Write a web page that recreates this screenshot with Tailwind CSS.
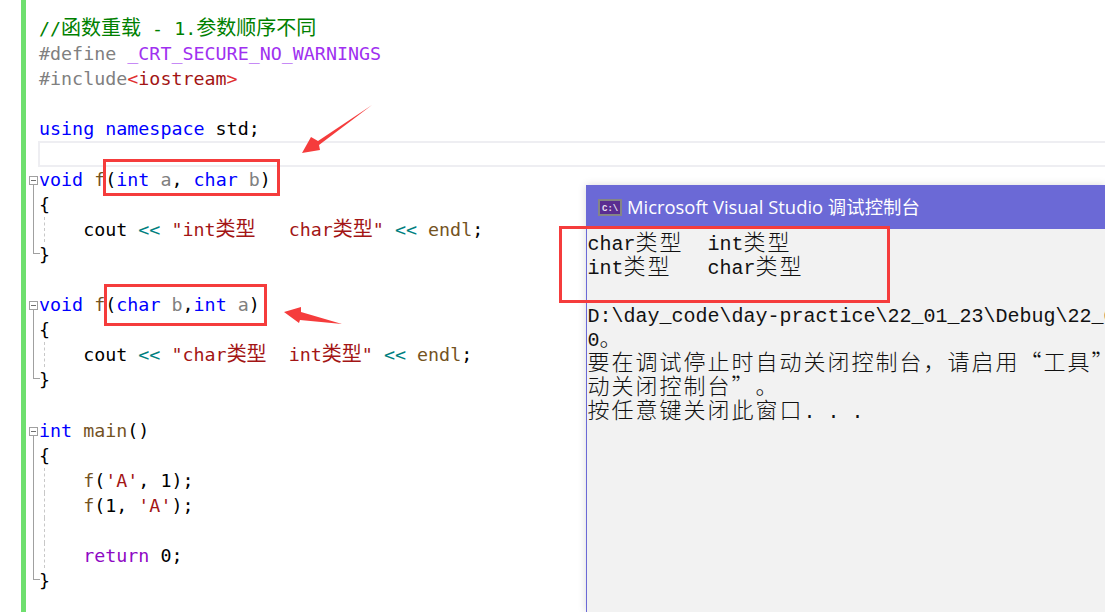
<!doctype html>
<html lang="zh-CN">
<head>
<meta charset="utf-8">
<script src="https://cdn.jsdelivr.net/npm/@tailwindcss/browser@4"></script>
</head>
<body class="bg-white">
<div class="relative w-[1105px] h-[612px] overflow-hidden bg-white">
  <div class="ml-[21px] h-full border-l-[5px] border-[#6fdf6f] pt-[16px] font-['DejaVu_Sans_Mono','Noto_Sans_CJK_SC',monospace] text-[18.33px] text-black">
    <div class="whitespace-pre h-[25.1px] leading-[25.1px] pl-[13px] text-[#008000]">//<span class="text-[20px] leading-[0px] font-['Noto_Sans_CJK_SC',sans-serif]">函数重载</span> - 1.<span class="text-[20px] leading-[0px] font-['Noto_Sans_CJK_SC',sans-serif]">参数顺序不同</span></div>
    <div class="whitespace-pre h-[25.1px] leading-[25.1px] pl-[13px] text-[#808080]">#define <span class="text-[#a030f0]">_CRT_SECURE_NO_WARNINGS</span></div>
    <div class="whitespace-pre h-[25.1px] leading-[25.1px] pl-[13px] text-[#808080]">#include<span class="text-[#e03030]">&lt;</span><span class="text-[#a31515]">iostream</span><span class="text-[#e03030]">&gt;</span></div>
    <div class="h-[25.1px]"></div>
    <div class="whitespace-pre h-[25.1px] leading-[25.1px] pl-[13px]"><span class="text-[#0000ff]">using namespace</span> std;</div>
    <div class="h-[25.1px] ml-[12px] -mr-[4px] border-2 border-[#eeeef2]"></div>
    <div class="whitespace-pre relative h-[25.1px] leading-[25.1px] pl-[13px]"><span class="absolute left-[3px] top-[9px] size-[9px] border border-[#a0a0a0] flex items-center justify-center"><span class="block w-[5px] h-px bg-[#707070]"></span></span><span class="absolute left-[7px] top-[18px] h-[8px] w-px bg-[#a0a0a0]"></span><span class="text-[#0000ff]">void</span> <span class="text-[#74531f]">f</span>(<span class="text-[#0000ff]">int</span> <span class="text-[#808080]">a</span>, <span class="text-[#0000ff]">char</span> <span class="text-[#808080]">b</span>)</div>
    <div class="whitespace-pre relative h-[25.1px] leading-[25.1px] pl-[13px]"><span class="absolute left-[7px] top-0 h-full w-px bg-[#a0a0a0]"></span>{</div>
    <div class="whitespace-pre relative h-[25.1px] leading-[25.1px] pl-[13px]"><span class="absolute left-[7px] top-0 h-full w-px bg-[#a0a0a0]"></span><span class="absolute left-[18px] top-0 h-full border-l border-dashed border-[#c8c8c8]"></span>    cout <span class="text-[#008080]">&lt;&lt;</span> <span class="text-[#a31515]">"int<span class="text-[20px] leading-[0px] font-['Noto_Sans_CJK_SC',sans-serif]">类型</span>   char<span class="text-[20px] leading-[0px] font-['Noto_Sans_CJK_SC',sans-serif]">类型</span>"</span> <span class="text-[#008080]">&lt;&lt;</span> <span class="text-[#74531f]">endl</span>;</div>
    <div class="whitespace-pre relative h-[25.1px] leading-[25.1px] pl-[13px]"><span class="absolute left-[7px] top-0 h-[12px] w-[7px] border-l border-b border-[#a0a0a0]"></span>}</div>
    <div class="h-[25.1px]"></div>
    <div class="whitespace-pre relative h-[25.1px] leading-[25.1px] pl-[13px]"><span class="absolute left-[3px] top-[9px] size-[9px] border border-[#a0a0a0] flex items-center justify-center"><span class="block w-[5px] h-px bg-[#707070]"></span></span><span class="absolute left-[7px] top-[18px] h-[8px] w-px bg-[#a0a0a0]"></span><span class="text-[#0000ff]">void</span> <span class="text-[#74531f]">f</span>(<span class="text-[#0000ff]">char</span> <span class="text-[#808080]">b</span>,<span class="text-[#0000ff]">int</span> <span class="text-[#808080]">a</span>)</div>
    <div class="whitespace-pre relative h-[25.1px] leading-[25.1px] pl-[13px]"><span class="absolute left-[7px] top-0 h-full w-px bg-[#a0a0a0]"></span>{</div>
    <div class="whitespace-pre relative h-[25.1px] leading-[25.1px] pl-[13px]"><span class="absolute left-[7px] top-0 h-full w-px bg-[#a0a0a0]"></span><span class="absolute left-[18px] top-0 h-full border-l border-dashed border-[#c8c8c8]"></span>    cout <span class="text-[#008080]">&lt;&lt;</span> <span class="text-[#a31515]">"char<span class="text-[20px] leading-[0px] font-['Noto_Sans_CJK_SC',sans-serif]">类型</span>  int<span class="text-[20px] leading-[0px] font-['Noto_Sans_CJK_SC',sans-serif]">类型</span>"</span> <span class="text-[#008080]">&lt;&lt;</span> <span class="text-[#74531f]">endl</span>;</div>
    <div class="whitespace-pre relative h-[25.1px] leading-[25.1px] pl-[13px]"><span class="absolute left-[7px] top-0 h-[12px] w-[7px] border-l border-b border-[#a0a0a0]"></span>}</div>
    <div class="h-[25.1px]"></div>
    <div class="whitespace-pre relative h-[25.1px] leading-[25.1px] pl-[13px]"><span class="absolute left-[3px] top-[9px] size-[9px] border border-[#a0a0a0] flex items-center justify-center"><span class="block w-[5px] h-px bg-[#707070]"></span></span><span class="absolute left-[7px] top-[18px] h-[8px] w-px bg-[#a0a0a0]"></span><span class="text-[#0000ff]">int</span> <span class="text-[#74531f]">main</span>()</div>
    <div class="whitespace-pre relative h-[25.1px] leading-[25.1px] pl-[13px]"><span class="absolute left-[7px] top-0 h-full w-px bg-[#a0a0a0]"></span>{</div>
    <div class="whitespace-pre relative h-[25.1px] leading-[25.1px] pl-[13px]"><span class="absolute left-[7px] top-0 h-full w-px bg-[#a0a0a0]"></span><span class="absolute left-[18px] top-0 h-full border-l border-dashed border-[#c8c8c8]"></span>    <span class="text-[#74531f]">f</span>(<span class="text-[#a31515]">'A'</span>, 1);</div>
    <div class="whitespace-pre relative h-[25.1px] leading-[25.1px] pl-[13px]"><span class="absolute left-[7px] top-0 h-full w-px bg-[#a0a0a0]"></span><span class="absolute left-[18px] top-0 h-full border-l border-dashed border-[#c8c8c8]"></span>    <span class="text-[#74531f]">f</span>(1, <span class="text-[#a31515]">'A'</span>);</div>
    <div class="whitespace-pre relative h-[25.1px] leading-[25.1px] pl-[13px]"><span class="absolute left-[7px] top-0 h-full w-px bg-[#a0a0a0]"></span><span class="absolute left-[18px] top-0 h-full border-l border-dashed border-[#c8c8c8]"></span></div>
    <div class="whitespace-pre relative h-[25.1px] leading-[25.1px] pl-[13px]"><span class="absolute left-[7px] top-0 h-full w-px bg-[#a0a0a0]"></span><span class="absolute left-[18px] top-0 h-full border-l border-dashed border-[#c8c8c8]"></span>    <span class="text-[#8f08c4]">return</span> 0;</div>
    <div class="whitespace-pre relative h-[25.1px] leading-[25.1px] pl-[13px]"><span class="absolute left-[7px] top-0 h-[12px] w-[7px] border-l border-b border-[#a0a0a0]"></span>}</div>
  </div>

  <!-- console window -->
  <div class="absolute left-[586px] top-[185px] right-0 bottom-0 flex flex-col bg-[#f2f2f2] border-l border-[#6b69d6] shadow-[0_0_8px_rgba(0,0,0,0.15)]">
    <div class="h-[44px] shrink-0 bg-[#6b69d6] flex items-center pl-[11px] gap-[5px] text-white text-[18.4px] font-['Open_Sans','Noto_Sans_CJK_SC',sans-serif] whitespace-nowrap">
      <svg class="w-[24px] h-[17px] shrink-0" viewBox="0 0 24 17"><rect x="1" y="1" width="22" height="15" fill="#5a2d91" stroke="#858585" stroke-width="2"/><text x="4" y="12" font-size="9" font-family="Liberation Mono" font-weight="bold" fill="#e8e0f0">C:\</text></svg>
      <span>Microsoft Visual Studio 调试控制台</span>
    </div>
    <div class="flex-1 overflow-hidden text-[20px] leading-[24px] text-[#111] font-['Liberation_Mono','Noto_Sans_CJK_SC',monospace] pl-[0.5px] pt-[4px] [text-spacing-trim:space-all]">
      <div class="whitespace-pre h-[24px]">char<span class="text-[22px] leading-[0px] tracking-[2px] font-light font-['Noto_Sans_CJK_SC',sans-serif]">类型</span>  int<span class="text-[22px] leading-[0px] tracking-[2px] font-light font-['Noto_Sans_CJK_SC',sans-serif]">类型</span></div>
      <div class="whitespace-pre h-[24px]">int<span class="text-[22px] leading-[0px] tracking-[2px] font-light font-['Noto_Sans_CJK_SC',sans-serif]">类型</span>   char<span class="text-[22px] leading-[0px] tracking-[2px] font-light font-['Noto_Sans_CJK_SC',sans-serif]">类型</span></div>
      <div class="h-[24px]"></div>
      <div class="whitespace-pre h-[24px]">D:\day_code\day-practice\22_01_23\Debug\22_0</div>
      <div class="whitespace-pre h-[24px]">0<span class="text-[22px] leading-[0px] tracking-[2px] font-light font-['Noto_Sans_CJK_SC',sans-serif]">。</span></div>
      <div class="whitespace-pre h-[24px]"><span class="text-[22px] leading-[0px] tracking-[2px] font-light font-['Noto_Sans_CJK_SC',sans-serif]">要在调试停止时自动关闭控制台，请启用“工具”</span></div>
      <div class="whitespace-pre h-[24px]"><span class="text-[22px] leading-[0px] tracking-[2px] font-light font-['Noto_Sans_CJK_SC',sans-serif]">动关闭控制台”。</span></div>
      <div class="whitespace-pre h-[24px]"><span class="text-[22px] leading-[0px] tracking-[2px] font-light font-['Noto_Sans_CJK_SC',sans-serif]">按任意键关闭此窗口</span>. . .</div>
    </div>
  </div>

  <!-- annotations -->
  <div class="absolute left-[103px] top-[159px] w-[177px] h-[37px] border-[3px] border-[#f53c3c]"></div>
  <div class="absolute left-[104px] top-[284px] w-[163px] h-[42px] border-[3px] border-[#f53c3c]"></div>
  <div class="absolute left-[559px] top-[226px] w-[331px] h-[77px] border-[3px] border-[#f53c3c]"></div>
  <svg class="absolute left-0 top-0 w-[1105px] h-[612px] pointer-events-none" viewBox="0 0 1105 612">
    <polygon fill="#f53c3c" points="302,153 311,137 318,141 372,105 319,145 320,150"/>
    <polygon fill="#f53c3c" points="284,312 301,307 301,312 342,324 300,320 299,323"/>
  </svg>
</div>
</body>
</html>
